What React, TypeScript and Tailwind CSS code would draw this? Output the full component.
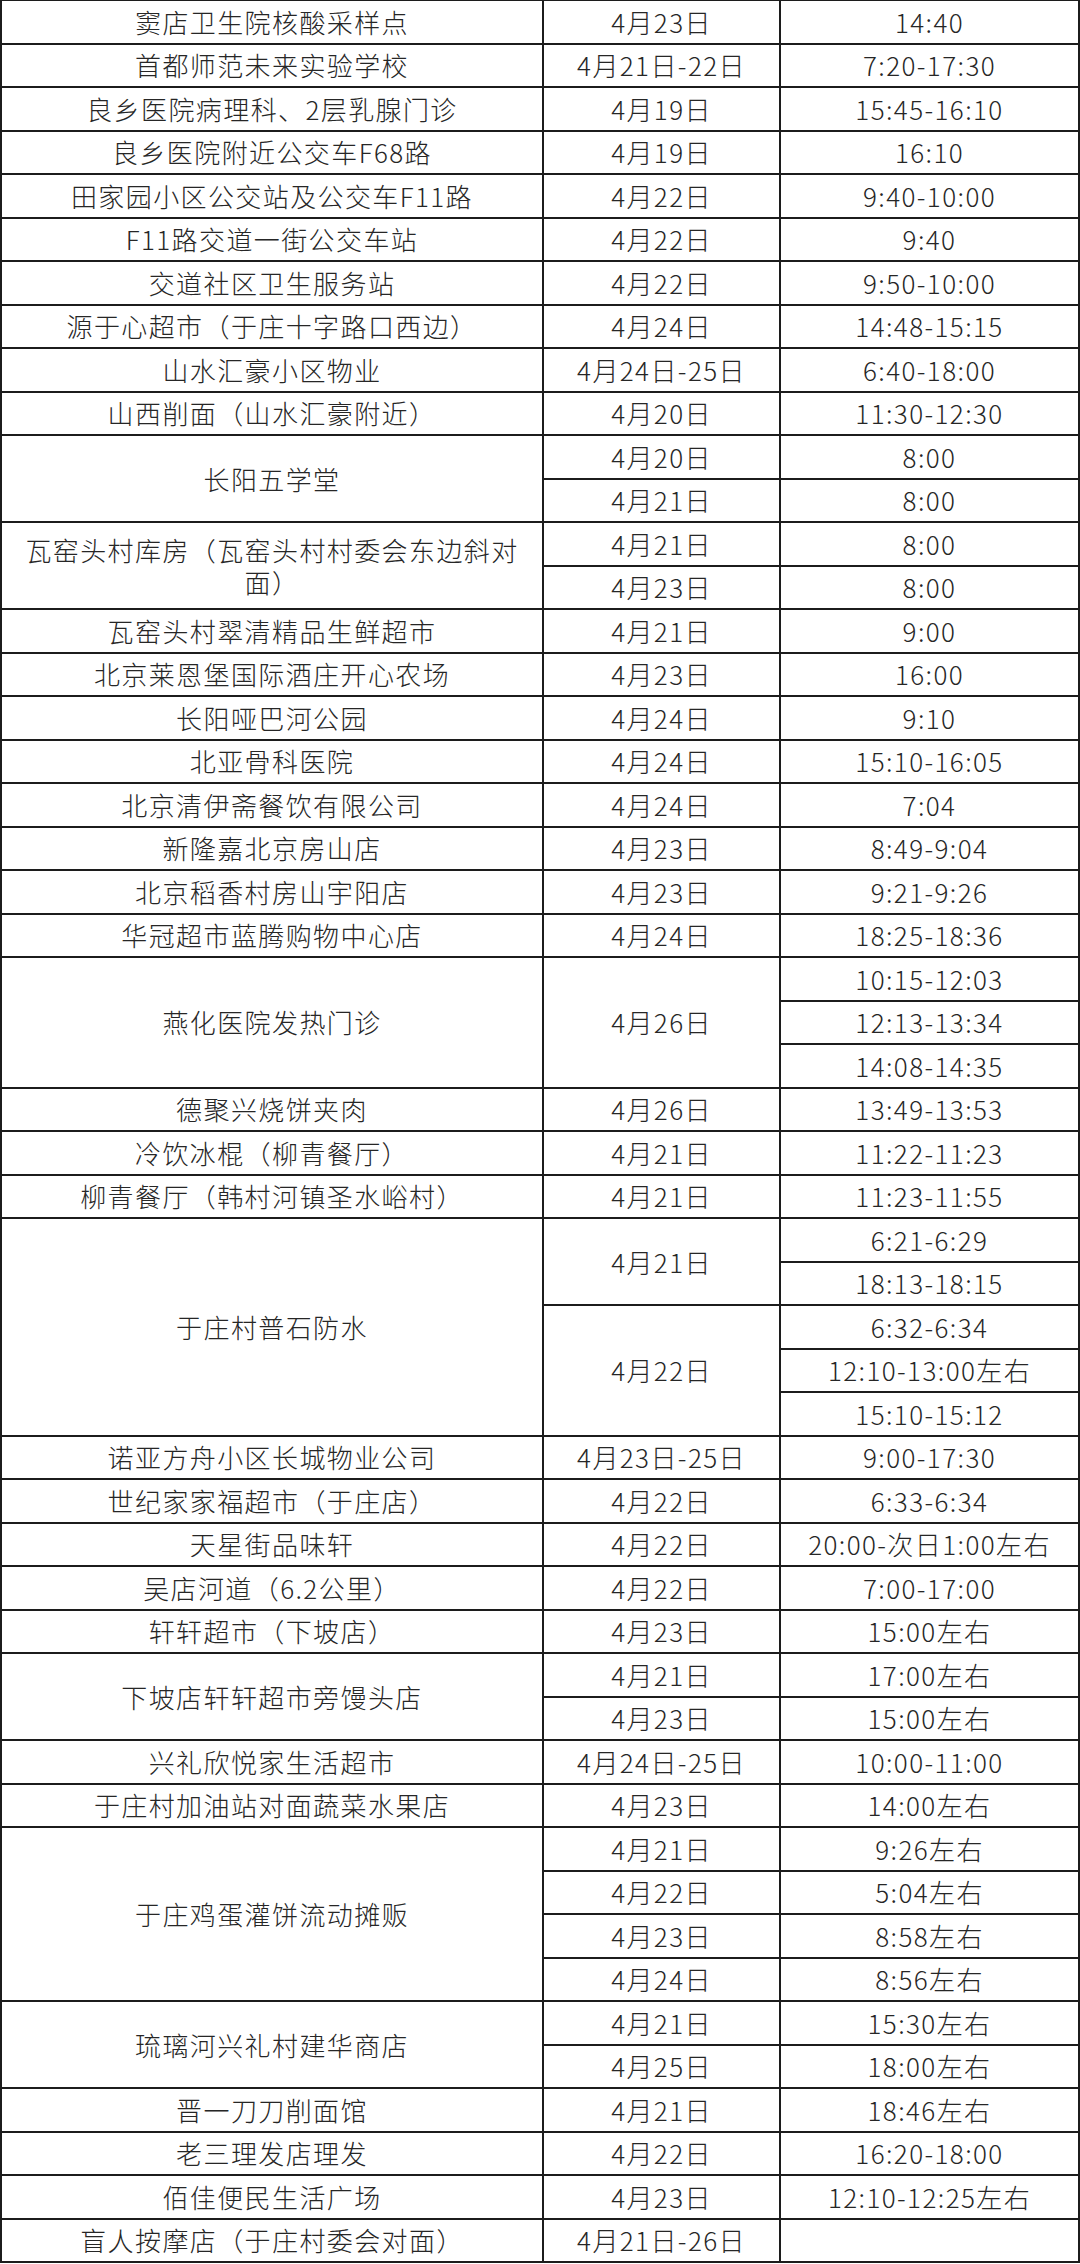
type Group = [string, [string, string[]][]];

const rows: Group[] = [
  ["窦店卫生院核酸采样点", [["4月23日", ["14:40"]]]],
  ["首都师范未来实验学校", [["4月21日-22日", ["7:20-17:30"]]]],
  ["良乡医院病理科、2层乳腺门诊", [["4月19日", ["15:45-16:10"]]]],
  ["良乡医院附近公交车F68路", [["4月19日", ["16:10"]]]],
  ["田家园小区公交站及公交车F11路", [["4月22日", ["9:40-10:00"]]]],
  ["F11路交道一街公交车站", [["4月22日", ["9:40"]]]],
  ["交道社区卫生服务站", [["4月22日", ["9:50-10:00"]]]],
  ["源于心超市（于庄十字路口西边）", [["4月24日", ["14:48-15:15"]]]],
  ["山水汇豪小区物业", [["4月24日-25日", ["6:40-18:00"]]]],
  ["山西削面（山水汇豪附近）", [["4月20日", ["11:30-12:30"]]]],
  ["长阳五学堂", [["4月20日", ["8:00"]], ["4月21日", ["8:00"]]]],
  ["瓦窑头村库房（瓦窑头村村委会东边斜对面）", [["4月21日", ["8:00"]], ["4月23日", ["8:00"]]]],
  ["瓦窑头村翠清精品生鲜超市", [["4月21日", ["9:00"]]]],
  ["北京莱恩堡国际酒庄开心农场", [["4月23日", ["16:00"]]]],
  ["长阳哑巴河公园", [["4月24日", ["9:10"]]]],
  ["北亚骨科医院", [["4月24日", ["15:10-16:05"]]]],
  ["北京清伊斋餐饮有限公司", [["4月24日", ["7:04"]]]],
  ["新隆嘉北京房山店", [["4月23日", ["8:49-9:04"]]]],
  ["北京稻香村房山宇阳店", [["4月23日", ["9:21-9:26"]]]],
  ["华冠超市蓝腾购物中心店", [["4月24日", ["18:25-18:36"]]]],
  ["燕化医院发热门诊", [["4月26日", ["10:15-12:03", "12:13-13:34", "14:08-14:35"]]]],
  ["德聚兴烧饼夹肉", [["4月26日", ["13:49-13:53"]]]],
  ["冷饮冰棍（柳青餐厅）", [["4月21日", ["11:22-11:23"]]]],
  ["柳青餐厅（韩村河镇圣水峪村）", [["4月21日", ["11:23-11:55"]]]],
  [
    "于庄村普石防水",
    [
      ["4月21日", ["6:21-6:29", "18:13-18:15"]],
      ["4月22日", ["6:32-6:34", "12:10-13:00左右", "15:10-15:12"]],
    ],
  ],
  ["诺亚方舟小区长城物业公司", [["4月23日-25日", ["9:00-17:30"]]]],
  ["世纪家家福超市（于庄店）", [["4月22日", ["6:33-6:34"]]]],
  ["天星街品味轩", [["4月22日", ["20:00-次日1:00左右"]]]],
  ["吴店河道（6.2公里）", [["4月22日", ["7:00-17:00"]]]],
  ["轩轩超市（下坡店）", [["4月23日", ["15:00左右"]]]],
  ["下坡店轩轩超市旁馒头店", [["4月21日", ["17:00左右"]], ["4月23日", ["15:00左右"]]]],
  ["兴礼欣悦家生活超市", [["4月24日-25日", ["10:00-11:00"]]]],
  ["于庄村加油站对面蔬菜水果店", [["4月23日", ["14:00左右"]]]],
  [
    "于庄鸡蛋灌饼流动摊贩",
    [
      ["4月21日", ["9:26左右"]],
      ["4月22日", ["5:04左右"]],
      ["4月23日", ["8:58左右"]],
      ["4月24日", ["8:56左右"]],
    ],
  ],
  ["琉璃河兴礼村建华商店", [["4月21日", ["15:30左右"]], ["4月25日", ["18:00左右"]]]],
  ["晋一刀刀削面馆", [["4月21日", ["18:46左右"]]]],
  ["老三理发店理发", [["4月22日", ["16:20-18:00"]]]],
  ["佰佳便民生活广场", [["4月23日", ["12:10-12:25左右"]]]],
  ["盲人按摩店（于庄村委会对面）", [["4月21日-26日", [""]]]],
];

const span: Record<number, string> = {
  1: "row-span-1",
  2: "row-span-2",
  3: "row-span-3",
  4: "row-span-4",
  5: "row-span-5",
};

const cell =
  "flex items-center justify-center text-center border-r-2 border-b-2 border-[#1c1c1c] px-[20px] leading-[32px]";

export default function App() {
  const cells: React.ReactNode[] = [];
  rows.forEach(([name, dates], gi) => {
    const total = dates.reduce((n, [, t]) => n + t.length, 0);
    cells.push(
      <div key={`n${gi}`} className={`${cell} ${span[total]}`}>
        {name}
      </div>
    );
    dates.forEach(([date, times], di) => {
      cells.push(
        <div key={`d${gi}-${di}`} className={`${cell} ${span[times.length]}`}>
          {date}
        </div>
      );
      times.forEach((t, ti) => {
        cells.push(
          <div key={`t${gi}-${di}-${ti}`} className={cell}>
            {t}
          </div>
        );
      });
    });
  });

  return (
    <div className="w-[1080px] bg-white text-[#262626] font-['Noto_Sans_CJK_SC',sans-serif] text-[26px] tracking-[1.4px] font-light">
      <div className="grid grid-cols-[542px_237px_299px] grid-rows-[repeat(52,43.5px)] border-t-[1.5px] border-l-2 border-[#1c1c1c]">
        {cells}
      </div>
    </div>
  );
}
